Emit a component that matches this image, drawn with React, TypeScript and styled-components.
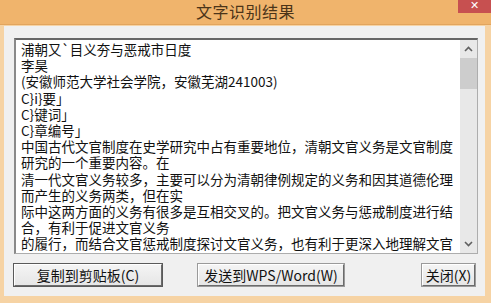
import React from 'react';
import styled, { createGlobalStyle } from 'styled-components';

const GlobalStyle = createGlobalStyle`
  html, body {
    margin: 0;
    padding: 0;
    background: #f3c48a;
  }
`;

const Window = styled.div`
  width: 491px;
  height: 303px;
  display: flex;
  flex-direction: column;
  background: #f6d3a4;
  font-family: "Noto Sans CJK SC", "Microsoft YaHei", sans-serif;
  overflow: hidden;
`;

const TitleBar = styled.div`
  height: 24px;
  flex: none;
  display: grid;
  grid-template-columns: 1fr auto 1fr;
  background: #f0b46c;
  border-bottom: 1px solid #e2a55e;
`;

const Title = styled.div`
  grid-column: 2;
  font-size: 16px;
  line-height: 22px;
  color: #4b3419;
  letter-spacing: 0.5px;
`;

const CloseButton = styled.div`
  grid-column: 3;
  justify-self: end;
  width: 33px;
  height: 13px;
  background: #c75050;
  color: #fff;
  font-size: 11px;
  line-height: 12px;
  text-align: center;
  font-family: "DejaVu Sans", sans-serif;
`;

const Body = styled.div`
  flex: 1;
  margin: 1px 6px 7px 4px;
  background: #f0f0f0;
  padding: 12px 7px 0 10px;
  display: flex;
  flex-direction: column;
`;

const TextBox = styled.div`
  height: 213px;
  display: flex;
  background: #fff;
  border: 1px solid #adadad;
  border-top: 2px solid #666;
  border-left: 2px solid #8a8a8a;
`;

const Content = styled.div`
  flex: 1;
  padding: 1px 0 0 5px;
  font-size: 13.5px;
  line-height: 16.2px;
  color: #111;
  white-space: pre;
  overflow: hidden;
`;

const Scrollbar = styled.div`
  width: 17px;
  flex: none;
  display: flex;
  flex-direction: column;
  align-items: center;
  background: #e8e8e8;
`;

const Arrow = styled.div`
  height: 18px;
  display: flex;
  align-items: center;
  justify-content: center;
`;

const Thumb = styled.div`
  width: 17px;
  height: 31px;
  background: #cdcdcd;
`;

const Track = styled.div`
  flex: 1;
`;

const ButtonRow = styled.div`
  display: flex;
  align-items: center;
  margin-top: 10px;
`;

const Button = styled.div<{ w: number; ml?: number; focused?: boolean }>`
  width: ${p => p.w}px;
  margin-left: ${p => p.ml || 0}px;
  height: 22px;
  box-sizing: border-box;
  border: 1px solid #fff;
  border-right-color: #6b6b6b;
  border-bottom-color: #6b6b6b;
  outline: 1px solid ${p => (p.focused ? '#5a5a5a' : '#9a9a9a')};
  background: linear-gradient(#f4f4f4, #e6e6e6);
  font-size: 14px;
  line-height: 20px;
  text-align: center;
  color: #111;
  font-family: "Noto Sans CJK SC", sans-serif;
`;

const Chevron = ({ up }: { up?: boolean }) => (
  <svg width="9" height="6" viewBox="0 0 9 6">
    <path
      d={up ? 'M1 5 L4.5 1.5 L8 5' : 'M1 1 L4.5 4.5 L8 1'}
      fill="none"
      stroke="#606060"
      strokeWidth="1.6"
    />
  </svg>
);

const lines = [
  '浦朝又`目义夯与恶戒市日度',
  '李昊',
  '(安徽师范大学社会学院，安徽芜湖241003)',
  'C}i}要」',
  'C}键词」',
  'C}章编号」',
  '中国古代文官制度在史学研究中占有重要地位，清朝文官义务是文官制度',
  '研究的一个重要内容。在',
  '清一代文官义务较多，主要可以分为清朝律例规定的义务和因其道德伦理',
  '而产生的义务两类，但在实',
  '际中这两方面的义务有很多是互相交叉的。把文官义务与惩戒制度进行结',
  '合，有利于促进文官义务',
  '的履行，而结合文官惩戒制度探讨文官义务，也有利于更深入地理解文官',
];

export default function App() {
  return (
    <Window>
      <GlobalStyle />
      <TitleBar>
        <Title>文字识别结果</Title>
        <CloseButton>✕</CloseButton>
      </TitleBar>
      <Body>
        <TextBox>
          <Content>{lines.join('\n')}</Content>
          <Scrollbar>
            <Arrow><Chevron up /></Arrow>
            <Thumb />
            <Track />
            <Arrow><Chevron /></Arrow>
          </Scrollbar>
        </TextBox>
        <ButtonRow>
          <Button w={148} focused>复制到剪贴板(C)</Button>
          <Button w={146} ml={36}>发送到WPS/Word(W)</Button>
          <Button w={53} ml={78}>关闭(X)</Button>
        </ButtonRow>
      </Body>
    </Window>
  );
}
